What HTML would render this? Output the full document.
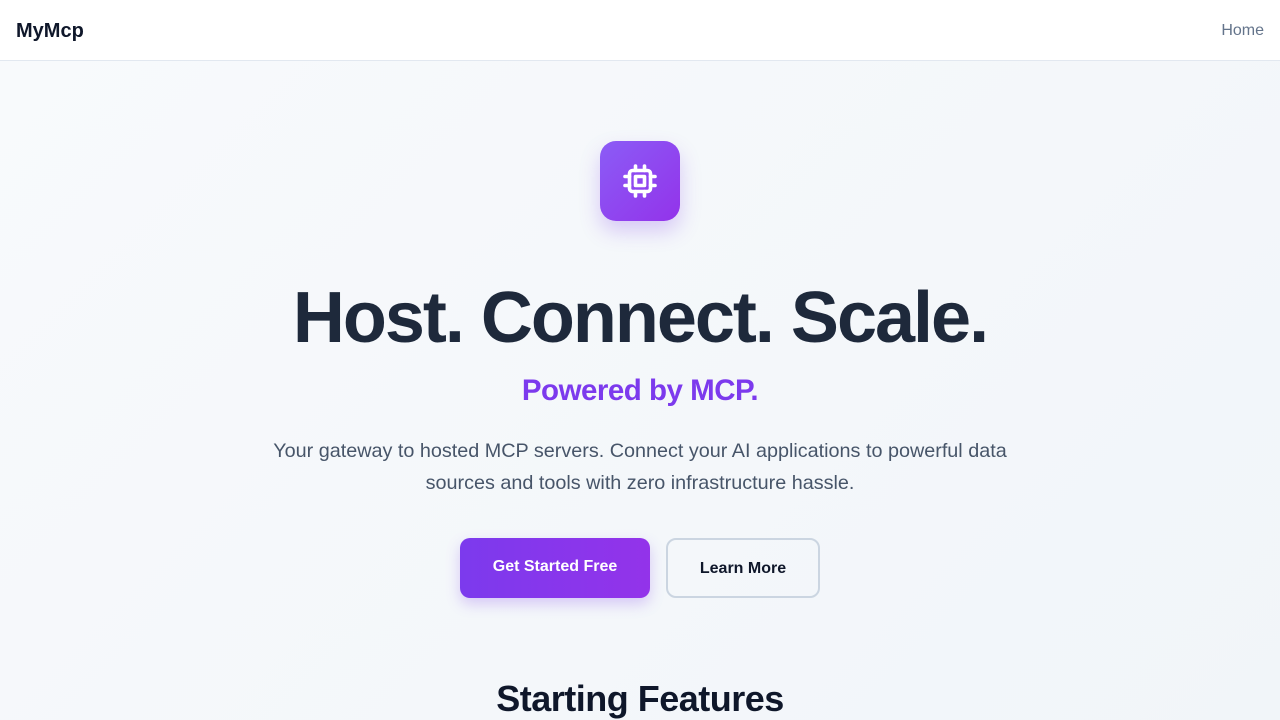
<!DOCTYPE html>
<html><head><meta charset="utf-8"><style>
*{margin:0;padding:0;box-sizing:border-box}
body{width:1280px;height:720px;overflow:hidden;background:linear-gradient(135deg,#f8fafc,#f1f5f9);font-family:"Liberation Sans",sans-serif}
nav{height:61px;background:#fff;border-bottom:1px solid #e2e8f0;position:relative}
.logo{position:absolute;left:16px;top:20px;font-weight:bold;font-size:20px;color:#0f172a;letter-spacing:0}
.home{position:absolute;right:16px;top:22px;font-size:16px;color:#64748b}
.icon{position:absolute;left:600px;top:141px;width:80px;height:80px;border-radius:16px;background:linear-gradient(135deg,#8b5cf6,#9333ea);box-shadow:0 10px 20px rgba(124,58,237,.25);display:flex;align-items:center;justify-content:center}
h1{position:absolute;top:277px;left:0;width:1280px;text-align:center;font-size:72px;font-weight:bold;color:#1e293b;letter-spacing:-2px}
h2{position:absolute;top:374px;left:0;width:1280px;text-align:center;font-size:29.5px;font-weight:bold;color:#7c3aed;letter-spacing:-0.5px}
p{position:absolute;top:435px;left:250px;width:780px;text-align:center;font-size:19.8px;line-height:32px;color:#475569}
.b1{position:absolute;left:460px;top:538px;width:190px;height:60px;border-radius:10px;background:linear-gradient(90deg,#7c3aed,#9333ea);color:#fff;font-weight:bold;font-size:16px;text-align:center;line-height:57px;box-shadow:0 6px 14px rgba(124,58,237,.25)}
.b2{position:absolute;left:666px;top:538px;width:154px;height:60px;border-radius:10px;border:2px solid #cbd5e1;color:#0f172a;font-weight:bold;font-size:16px;text-align:center;line-height:57px}
h3{position:absolute;top:678px;left:0;width:1280px;text-align:center;font-size:36px;font-weight:bold;color:#0f172a;letter-spacing:-0.5px}
</style></head><body>
<nav><div class="logo">MyMcp</div><div class="home">Home</div></nav>
<div class="icon"><svg width="36" height="36" viewBox="0 0 24 24" fill="none" stroke="#fff" stroke-width="2.4" stroke-linecap="round" stroke-linejoin="round"><rect x="5" y="5" width="14" height="14" rx="2"/><rect x="9" y="9" width="6" height="6"/><path d="M9 2v3M15 2v3M9 19v3M15 19v3M2 9h3M2 15h3M19 9h3M19 15h3"/></svg></div>
<h1>Host. Connect. Scale.</h1>
<h2>Powered by MCP.</h2>
<p>Your gateway to hosted MCP servers. Connect your AI applications to powerful data sources and tools with zero infrastructure hassle.</p>
<div class="b1">Get Started Free</div>
<div class="b2">Learn More</div>
<h3>Starting Features</h3>
</body></html>
